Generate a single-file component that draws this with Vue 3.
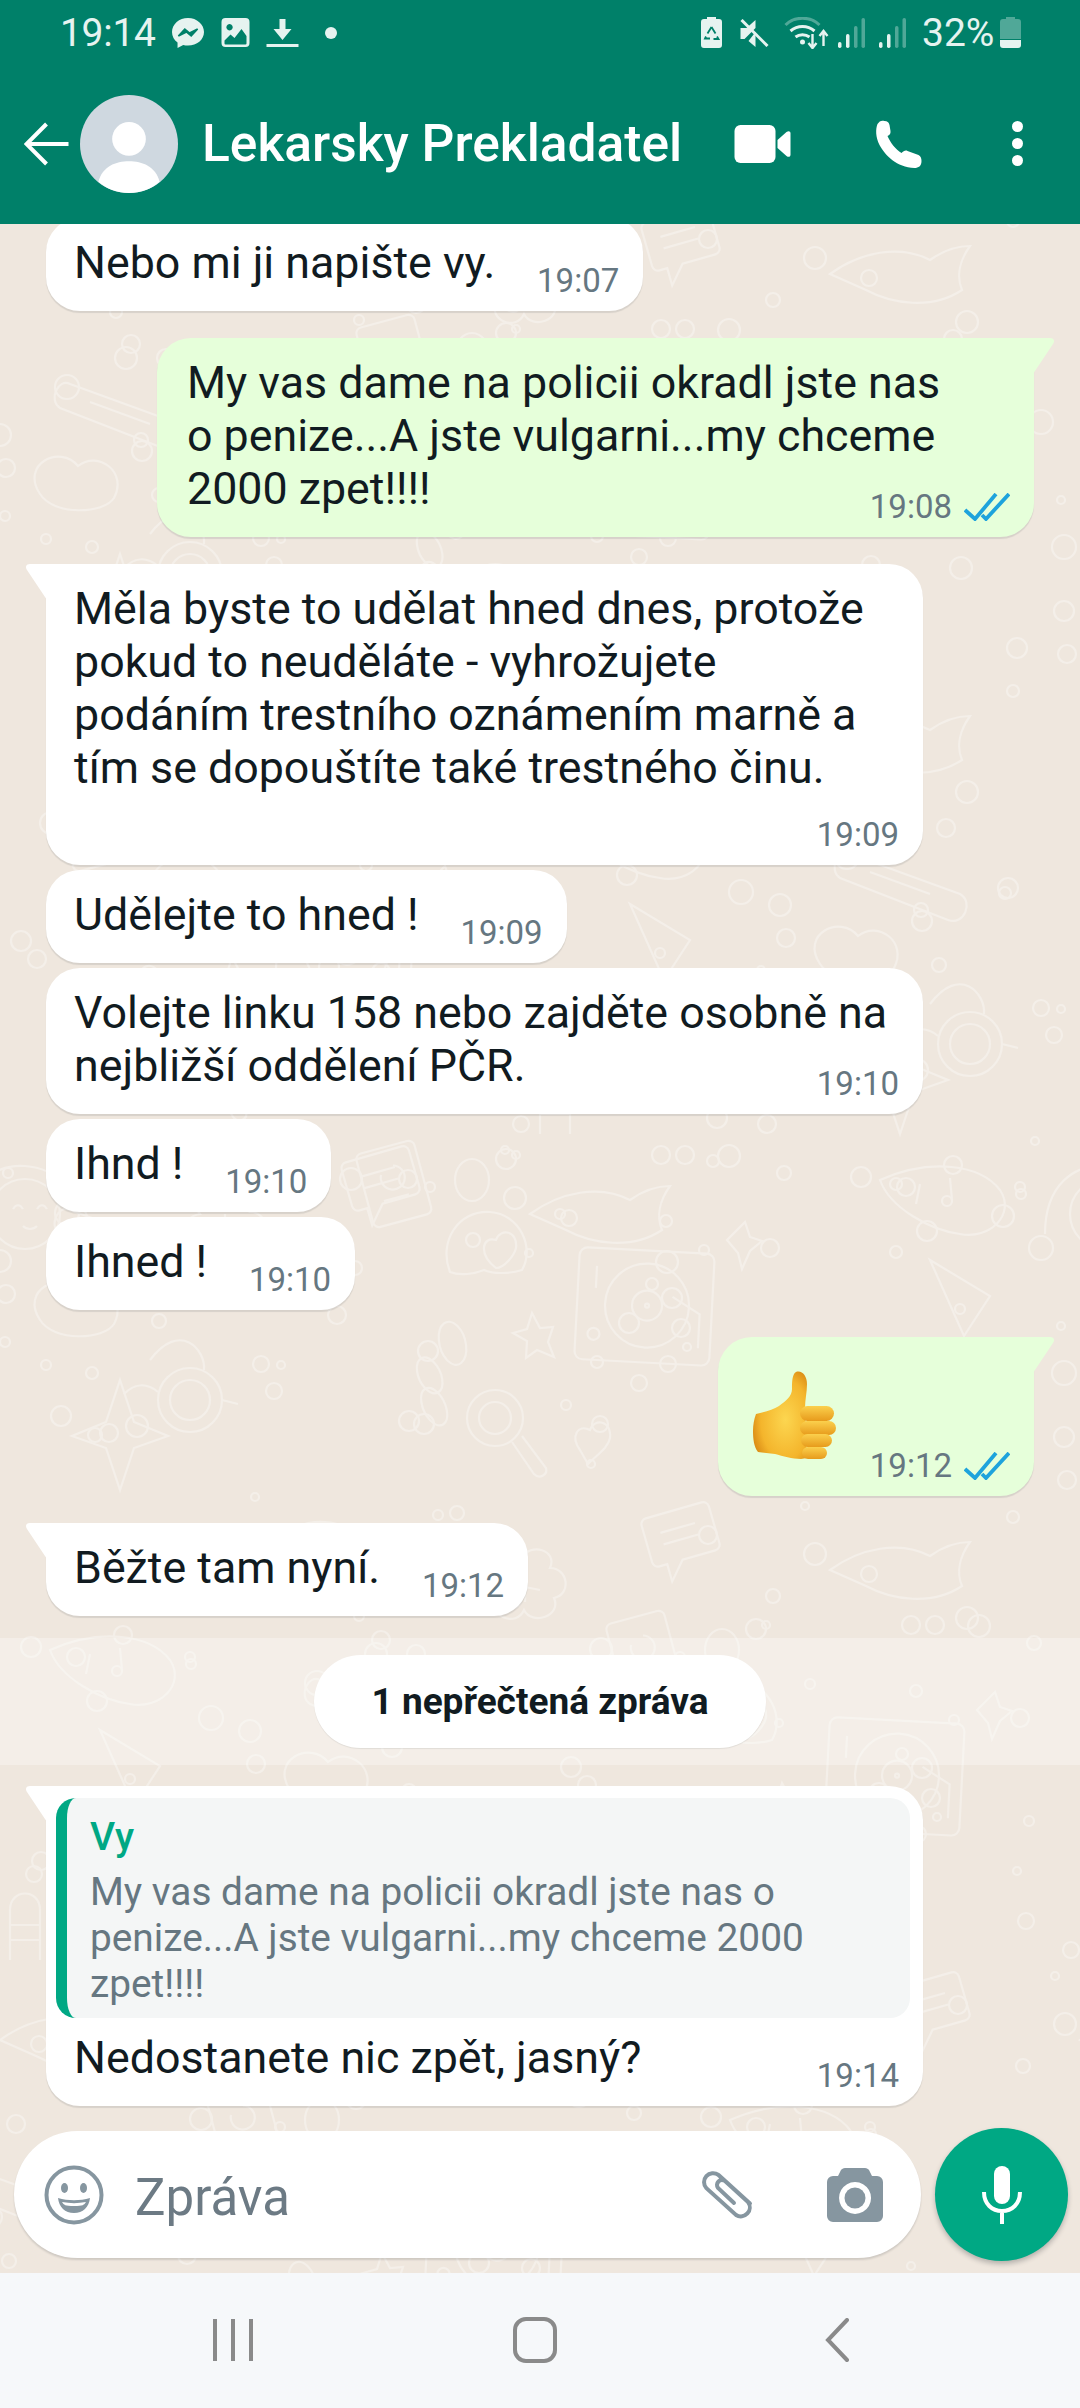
<template>
  <div class="phone">
    <header class="appbar">
      <div class="status">
        <span class="clock">19:14</span>
        <svg class="st st-msg" viewBox="0 0 30 30" preserveAspectRatio="none"><path class="st-fill" d="M15 0C6.700 0 0 6.200 0 14c0 4.300 2 8 5.200 10.500V30l5.300-3c1.400.400 2.900.600 4.500.600 8.300 0 15-6 15-13.600S23.300 0 15 0z"/><path d="M6 18l6-7 4.500 4L24 11l-6 7-4.500-4z" fill="#008069" stroke="#008069" stroke-width="1.500"/></svg>
        <svg class="st st-pic" viewBox="0 0 28 29"><path class="st-fill" fill-rule="evenodd" d="M4 0h20a4 4 0 0 1 4 4v21a4 4 0 0 1-4 4H4a4 4 0 0 1-4-4V4a4 4 0 0 1 4-4zM3 25.500a1 1 0 0 0 1 1h20a1 1 0 0 0 1-1V18l-5-7-7 9-4-3.500-6 6zM8 6a3.200 3.200 0 1 0 .1 0z"/></svg>
        <svg class="st st-down" viewBox="0 0 32 28"><path class="st-fill" d="M13 0h6v10h6l-9 11-9-11h6z"/><rect class="st-fill" y="25" width="32" height="3"/></svg>
        <span class="dot"></span>
        <span class="grow"></span>
        <svg class="st st-bat" viewBox="0 0 21 31"><path class="st-fill" d="M6 0h9v2h3a3 3 0 0 1 3 3v23a3 3 0 0 1-3 3H3a3 3 0 0 1-3-3V5a3 3 0 0 1 3-3h3z"/><path d="M10.500 10l-4 6.500M10.500 10l4 6.500M5 19.500l-1 2h5M16 19.500l1.500 2.500h-5" fill="none" stroke="#008069" stroke-width="1.800"/></svg>
        <svg class="st st-mute" viewBox="0 0 28 28"><path class="st-fill" d="M0 9h6l9-8v8L4 20H0zM15 13v15l-7-6z"/><path class="st-line" d="M1 1l26 26" stroke-width="3"/></svg>
        <svg class="st st-wifi" viewBox="0 0 44 32">
          <path class="st-line dim" d="M1 8C10-1 26-1 35 8" stroke-width="3"/>
          <path class="st-line" d="M6 14c7-6 17-6 24 0M11 20c4-3 10-3 14 0" stroke-width="3"/>
          <circle class="st-fill" cx="18" cy="25" r="2.500"/>
          <path class="st-line" d="M28 17v13M24 26l4 5 4-5M39 29V15M35 19l4-5 4 5" stroke-width="2.400"/>
        </svg>
        <svg class="st st-sig" viewBox="0 0 27 30"><rect class="st-fill" y="24" width="3.500" height="6" rx="1.700"/><rect class="st-fill" x="8" y="16" width="3.500" height="14" rx="1.700"/><rect class="st-fill dim" x="16" y="8" width="3.500" height="22" rx="1.700"/><rect class="st-fill dim" x="23.500" width="3.500" height="30" rx="1.700"/></svg>
        <svg class="st st-sig second" viewBox="0 0 27 30"><rect class="st-fill" y="24" width="3.500" height="6" rx="1.700"/><rect class="st-fill" x="8" y="16" width="3.500" height="14" rx="1.700"/><rect class="st-fill dim" x="16" y="8" width="3.500" height="22" rx="1.700"/><rect class="st-fill dim" x="23.500" width="3.500" height="30" rx="1.700"/></svg>
        <span class="percent">32%</span>
        <svg class="st st-level" viewBox="0 0 21 31"><path class="st-fill dim" d="M6 0h9v2h3a3 3 0 0 1 3 3v17H0V5a3 3 0 0 1 3-3h3z"/><path class="st-fill" d="M0 23h21v5a3 3 0 0 1-3 3H3a3 3 0 0 1-3-3z"/></svg>
      </div>
      <div class="toolbar">
        <svg class="back" viewBox="0 0 44 44"><path d="M44 22H3M22 2L2 22l20 20" fill="none" stroke="#fff" stroke-width="4"/></svg>
        <svg class="avatar" viewBox="0 0 96 96">
          <circle cx="48" cy="48" r="48" fill="#cfd8e0"/>
          <circle cx="48" cy="43" r="16.500" fill="#fff"/>
          <path d="M18 85c4-15 17-20 30-20s26 5 30 20c-8 7-18 11-30 11s-22-4-30-11z" fill="#fff"/>
        </svg>
        <h1 class="title">Lekarsky Prekladatel</h1>
        <svg class="video" viewBox="0 0 56 38"><rect width="41" height="38" rx="6" fill="#fff"/><path d="M43 15L52 7c2-1.500 4-1 4 1.500v21c0 2.500-2 3-4 1.500l-9-8z" fill="#fff"/></svg>
        <svg class="call" viewBox="0 0 48 48"><path d="M3 4C5 1 7 0 10 1c3 0 4 1 5 4l1 6c.3 3-1 4-3 5 3 7 8 13 14 17 2-2 4-3 6-2l11 4c2 1 3 3 3 6 0 5-3 7-7 7C22 47 11 36 5 25 1 17 1 9 3 4z" fill="#fff"/></svg>
        <span class="kebab"><i></i><i></i><i></i></span>
      </div>
    </header>

    <main class="chat">
      <svg class="doodles" width="1080" height="2049" viewBox="0 0 1080 2049">
        <defs>
          <g id="tile">
            <circle v-for="(b, i) in specks" :key="i" :cx="b.x" :cy="b.y" :r="b.r"/>
            <g transform="translate(355 5) rotate(-15)"><rect width="60" height="76" rx="6"/><path d="M20 26a12 12 0 1 0 14-6M16 52h26"/></g>
            <ellipse cx="472" cy="30" rx="17" ry="21"/>
            <path d="M450 122c-12-30 8-62 40-60 30 2 45 36 32 58-12 4-30 4-38 0-10 4-24 6-34 2z"/>
            <path d="M496 118c-18-14-14-32 0-28 4-12 22-10 20 8-2 8-12 20-20 20z"/>
            <g transform="translate(580 97) rotate(3)"><rect width="135" height="112" rx="8"/><circle cx="70" cy="55" r="42"/><circle cx="70" cy="55" r="15"/><circle cx="70" cy="55" r="2"/><circle cx="18" cy="86" r="6"/><path d="M95 45l28 16v34M18 18v22"/></g>
            <path d="M727 90l18-18 5 15 12 4-12 10-8 18-4-16z"/>
            <path d="M532 163l8 15 13-1-5 15 6 15-17-7-11 8 1-17-14-8 14-4z"/>
            <path d="M447 210a13 22 -15 1 1 1 1zM425 238a11 19 -25 1 1 1 1zM430 270a11 20 -25 1 1 1 1z"/>
            <circle cx="495" cy="268" r="28"/><circle cx="495" cy="268" r="16"/><path d="M512 292l22 32c6 6 14 0 12-6l-24-32"/>
            <path d="M580 300c-10-14-2-26 10-20 4-12 22-10 20 8-2 10-12 16-22 26z"/>
            <g transform="translate(345 380)"><path d="M-80 60c0-50 30-70 60-68s58 24 68 70"/><circle cx="-20" cy="40" r="35"/><path d="M-32 35c3-5 7-5 10 0M-8 35c3-5 7-5 10 0M-22 52c4 4 10 4 14 0"/></g>
            <g transform="translate(500 420)"><path d="M0 0c-14-18 14-30 22-12 8-16 36-8 28 10 18 0 22 26 4 30 8 18-22 28-30 12-8 18-36 6-28-12-14 0-18-24 4-28z"/><path d="M10 14l30 6M25 0v32"/></g>
            <g transform="translate(640 370) rotate(-16)"><path d="M0 6a6 6 0 0 1 6-6h58a6 6 0 0 1 6 6v38a6 6 0 0 1-6 6H30l-16 18V50H6a6 6 0 0 1-6-6z"/><path d="M16 18h36M16 30h36"/></g>
            <path d="M70 60l110 40c14 8 4 32-12 26L60 84c-12-8-2-30 10-24zM90 78l60 22"/>
            <path d="M40 170c-20-30 20-50 38-28 20-16 50 6 36 32-10 16-60 18-74-4z"/>
            <path d="M120 230l14 42 34 14-34 12-14 42-14-42-34-12 34-14z"/>
            <path d="M880 30c50-22 100-16 120 10 16 24-10 50-40 44-30-4-70-26-80-54zM920 34l-4 20M950 28l2 22"/>
            <path d="M930 110l60 36-26 40z"/>
            <g transform="translate(860 260)"><path d="M-20 80V30c0-22 30-22 30 0v50M-20 45h30M-20 60h30"/></g>
            <path d="M830 420c30-22 70-30 100-14 14-10 26-14 40-14-10 14-14 30-8 44-30 20-70 14-96 0z"/>
            <g transform="translate(190 250)"><circle cx="0" cy="0" r="32"/><circle cx="0" cy="0" r="20"/><path d="M-32-8c-12-10-24-8-34 2M32 0l16 4"/><path d="M-40-40c30-40 56-10 54 10"/></g>
          </g>
        </defs>
        <use v-for="r in tileRows" :key="r.y + '-' + r.x" href="#tile" :transform="`translate(${r.x} ${r.y})`"/>
      </svg>

      <section class="messages">
        <div class="bubble in" style="margin-bottom:27px"><p class="text">Nebo mi ji napište vy.<span class="spacer"></span></p><span class="time">19:07</span></div>

        <div class="bubble out tail full" style="margin-bottom:27px">
          <p class="text">{{ msg1 }}<span class="spacer"></span></p>
          <span class="time">19:08<svg class="ticks" viewBox="0 0 46 28"><path d="M1 17l10 9L32 1M18 22l4 4L45 1" fill="none" stroke="#1ea3dc" stroke-width="3.800"/></svg></span>
        </div>

        <div class="group">
          <div v-for="m in group1" :key="m.text" class="bubble in" :class="{ tail: m.tail, full: m.full, 'time-row': m.row }">
            <p class="text">{{ m.text }}<span class="spacer"></span></p>
            <span class="time">{{ m.time }}</span>
          </div>
        </div>

        <div class="bubble out tail thumbs">
          <svg class="emoji" viewBox="0 0 84 90">
            <defs>
              <linearGradient id="fist" x1="0" y1="0" x2="0" y2="1"><stop offset="0" stop-color="#fbd04d"/><stop offset="1" stop-color="#e79b1c"/></linearGradient>
              <radialGradient id="palm" cx=".6" cy=".55" r=".65"><stop offset="0" stop-color="#fcd650"/><stop offset=".7" stop-color="#f4b52c"/><stop offset="1" stop-color="#d98a14"/></radialGradient>
            </defs>
            <path d="M3 43C12 41 20 39 26 35c7-5 13-10 13-17 0-6 0-15 4-17 6-2 11 4 11 12 0 8-2 16-2 24l2 50-6 1c-9 0-18-3-26-5L5 81C1 76 0 68 0 60c0-6 1-12 3-17z" fill="url(#palm)"/>
            <rect x="47" y="35" width="34" height="15" rx="7.500" fill="url(#fist)"/>
            <rect x="47" y="50" width="36" height="14" rx="7" fill="url(#fist)"/>
            <rect x="48" y="63" width="31" height="13" rx="6.500" fill="url(#fist)"/>
            <rect x="49" y="76" width="25" height="12" rx="6" fill="url(#fist)"/>
          </svg>
          <span class="time">19:12<svg class="ticks" viewBox="0 0 46 28"><path d="M1 17l10 9L32 1M18 22l4 4L45 1" fill="none" stroke="#1ea3dc" stroke-width="3.800"/></svg></span>
        </div>

        <div class="bubble in tail"><p class="text">Běžte tam nyní.<span class="spacer"></span></p><span class="time">19:12</span></div>

        <div class="unread"><span class="pill">1 nepřečtená zpráva</span></div>

        <div class="bubble in tail full reply">
          <div class="quote">
            <strong>Vy</strong>
            <p>{{ quoted }}</p>
          </div>
          <p class="text">Nedostanete nic zpět, jasný?<span class="spacer"></span></p>
          <span class="time">19:14</span>
        </div>
      </section>

      <footer class="composer">
        <div class="field">
          <svg class="smile" viewBox="0 0 60 60">
            <circle cx="30" cy="30" r="27.500" fill="none" stroke="#8696a0" stroke-width="4"/>
            <ellipse cx="20.500" cy="23" rx="3.500" ry="5" fill="#8696a0"/><ellipse cx="39.500" cy="23" rx="3.500" ry="5" fill="#8696a0"/>
            <path d="M14 33c10 3 22 3 32 0-1 9-7 15-16 15s-15-6-16-15z" fill="#8696a0"/>
            <path d="M18 37c8 1.500 16 1.500 24 0-2 3-3 4-12 4s-10-1-12-4z" fill="#fff"/>
          </svg>
          <span class="placeholder">Zpráva</span>
          <svg class="clip" viewBox="0 0 60 54"><path d="M34 35L18 20a5 5 0 0 1 7-7L48 34a9 9 0 0 1-12 13L6.400 20.200a9 9 0 0 1 12-13.300L50 35.500" fill="none" stroke="#8696a0" stroke-width="4" stroke-linecap="round"/></svg>
          <svg class="camera" viewBox="0 0 56 54"><path fill-rule="evenodd" fill="#8696a0" d="M18 0h20c2 0 3 1 4 2l3 6h5a6 6 0 0 1 6 6v34a6 6 0 0 1-6 6H6a6 6 0 0 1-6-6V14a6 6 0 0 1 6-6h5l3-6c1-1 2-2 4-2zM28 14a16 16 0 1 0 .1 0z"/><circle cx="28" cy="30" r="10.500" fill="#8696a0"/></svg>
        </div>
        <button class="mic">
          <svg viewBox="0 0 40 58"><rect x="12" width="16" height="38" rx="8" fill="#fff"/><path d="M2 26c0 12 8 19 18 19s18-7 18-19M20 45v13" fill="none" stroke="#fff" stroke-width="4"/></svg>
        </button>
      </footer>
    </main>

    <nav class="navbar">
      <svg class="nav-lines" viewBox="0 0 40 42"><path d="M2 0v42M20 0v42M38 0v42" stroke="#8a8a8a" stroke-width="4" fill="none"/></svg>
      <span class="nav-home"></span>
      <svg class="nav-back" viewBox="0 0 24 44"><path d="M22 2L3 22l19 20" stroke="#8a8a8a" stroke-width="4" fill="none" stroke-linecap="round"/></svg>
    </nav>
  </div>
</template>

<script setup>
const msg1 = 'My vas dame na policii okradl jste nas\no penize...A jste vulgarni...my chceme\n2000 zpet!!!!'
const quoted = 'My vas dame na policii okradl jste nas o\npenize...A jste vulgarni...my chceme 2000\nzpet!!!!'

const group1 = [
  { text: 'Měla byste to udělat hned dnes, protože\npokud to neuděláte - vyhrožujete\npodáním trestního oznámením marně a\ntím se dopouštíte také trestného činu.', time: '19:09', tail: true, full: true, row: true },
  { text: 'Udělejte to hned !', time: '19:09' },
  { text: 'Volejte linku 158 nebo zajděte osobně na\nnejbližší oddělení PČR.', time: '19:10', full: true },
  { text: 'Ihnd !', time: '19:10' },
  { text: 'Ihned !', time: '19:10' }
]

// small rings of the wallpaper, spread with a fixed seed so every run looks the same
let seed = 17
const rnd = () => {
  seed = (seed * 16807) % 2147483647
  return seed / 2147483647
}
const specks = Array.from({ length: 90 }, () => ({
  x: Math.round(rnd() * 1080),
  y: Math.round(rnd() * 470),
  r: 4 + Math.round(rnd() * 8)
}))

const tileRows = [
  { x: 0, y: -370 },
  { x: 0, y: 100 },
  { x: -300, y: 570 },
  { x: 780, y: 570 },
  { x: 0, y: 926 },
  { x: 250, y: 1396 },
  { x: -830, y: 1396 },
  { x: -150, y: 1866 }
]
</script>

<style>
html,
body {
  margin: 0;
  background: #efe7de;
}
</style>

<style scoped>
.phone {
  width: 1080px;
  height: 2408px;
  display: flex;
  flex-direction: column;
  overflow: hidden;
  font-family: Roboto, "Noto Sans", sans-serif;
  color: #111b21;
}

.appbar {
  height: 224px;
  flex: none;
  background: #008069;
}
.status {
  height: 65px;
  padding: 0 59px 0 60px;
  display: flex;
  align-items: center;
  color: #e6f3f0;
  font-size: 39px;
}
.clock {
  width: 112px;
  letter-spacing: -0.3px;
}
.st {
  display: block;
  flex: none;
}
.st-fill {
  fill: #e6f3f0;
}
.st-line {
  fill: none;
  stroke: #e6f3f0;
}
.dim {
  opacity: 0.35;
}
.st-msg {
  width: 32px;
  height: 30px;
}
.st-pic {
  width: 29px;
  height: 29px;
  margin-left: 17px;
}
.st-down {
  width: 33px;
  height: 28px;
  margin-left: 16px;
}
.dot {
  width: 12px;
  height: 12px;
  margin-left: 26px;
  border-radius: 50%;
  background: #e6f3f0;
}
.grow {
  flex: 1;
}
.st-bat {
  width: 21px;
  height: 31px;
}
.st-mute {
  width: 29px;
  height: 28px;
  margin-left: 18px;
}
.st-wifi {
  width: 45px;
  height: 32px;
  margin-left: 15px;
}
.st-sig {
  width: 27px;
  height: 30px;
  margin-left: 9px;
}
.st-sig.second {
  margin-left: 14px;
}
.percent {
  margin-left: 16px;
  width: 78px;
}
.st-level {
  width: 21px;
  height: 31px;
}

.toolbar {
  height: 159px;
  display: flex;
  align-items: center;
  padding-bottom: 2px;
  box-sizing: border-box;
}
.back {
  width: 45px;
  height: 44px;
  margin-left: 24px;
}
.avatar {
  width: 98px;
  height: 98px;
  margin-left: 11px;
}
.title {
  margin: 0 0 0 24px;
  width: 532px;
  color: #fff;
  font-size: 51.500px;
  font-weight: 500;
  white-space: nowrap;
}
.video {
  width: 57px;
  height: 38px;
}
.call {
  width: 49px;
  height: 48px;
  margin-left: 83px;
}
.kebab {
  display: flex;
  flex-direction: column;
  gap: 6px;
  margin-left: 89px;
}
.kebab i {
  width: 11px;
  height: 11px;
  border-radius: 50%;
  background: #fff;
}

.chat {
  flex: 1;
  min-height: 0;
  position: relative;
  overflow: hidden;
  display: flex;
  flex-direction: column;
  background: #efe7de;
}
.doodles {
  position: absolute;
  top: 0;
  left: 0;
  fill: none;
  stroke: #f4efe9;
  stroke-width: 2.2;
}
.messages {
  flex: 1;
  min-height: 0;
  position: relative;
  display: flex;
  flex-direction: column;
  justify-content: flex-end;
  align-items: flex-start;
  padding: 0 46px;
}
.group {
  display: flex;
  flex-direction: column;
  align-items: flex-start;
  gap: 5px;
  margin-bottom: 27px;
}
.bubble {
  position: relative;
  flex: none;
  box-sizing: border-box;
  width: fit-content;
  padding: 18px 28px 22px;
  border-radius: 34px;
  background: #fff;
  box-shadow: 0 2px 1px rgba(11, 20, 26, 0.1);
}
.bubble.out {
  align-self: flex-end;
  background: #e6ffda;
  padding-left: 30px;
}
.bubble.full {
  width: 877px;
}
.bubble.time-row {
  padding-bottom: 18px;
}
.bubble.tail.in {
  border-top-left-radius: 0;
}
.bubble.tail.out {
  border-top-right-radius: 0;
}
.bubble.tail::before {
  content: "";
  position: absolute;
  top: 0;
  width: 21px;
  height: 36px;
  background: inherit;
}
.bubble.tail.in::before {
  left: -20px;
  clip-path: path("M21 0H4C0 0-1 3 1 6L21 36z");
}
.bubble.tail.out::before {
  right: -20px;
  clip-path: path("M0 0H17C21 0 22 3 20 6L0 36z");
}
.text {
  margin: 0;
  font-size: 44.750px;
  line-height: 53px;
  white-space: pre-line;
}
.spacer {
  display: inline-block;
  width: 120px;
  height: 1px;
}
.out .spacer {
  width: 170px;
}
.time {
  position: absolute;
  right: 24px;
  bottom: 11px;
  display: flex;
  align-items: center;
  gap: 12px;
  color: #667781;
  font-size: 33px;
  line-height: 38px;
}
.ticks {
  width: 46px;
  height: 28px;
}
.bubble.out.thumbs {
  width: 316px;
  height: 159px;
  margin-bottom: 27px;
  padding: 34px 35px 0;
}
.emoji {
  display: block;
  width: 84px;
  height: 90px;
}
.unread {
  flex: none;
  align-self: stretch;
  margin: 22px -46px 21px;
  height: 127px;
  display: flex;
  align-items: center;
  justify-content: center;
  background: rgba(255, 255, 255, 0.3);
}
.pill {
  width: 452px;
  height: 93px;
  display: flex;
  align-items: center;
  justify-content: center;
  border-radius: 47px;
  background: #fff;
  font-size: 37px;
  font-weight: 700;
  box-shadow: 0 1px 1px rgba(11, 20, 26, 0.08);
}
.bubble.reply {
  padding: 12px 13px 22px 10px;
}
.reply .text {
  padding-left: 18px;
  margin-top: 13px;
}
.quote {
  box-sizing: border-box;
  height: 220px;
  padding: 16px 20px 0 23px;
  border-left: 11px solid #00a884;
  border-radius: 20px;
  background: #f4f6f6;
  color: #667781;
  font-size: 38.800px;
}
.quote strong {
  display: block;
  margin-bottom: 9px;
  color: #00a884;
  font-size: 39px;
  font-weight: 500;
  line-height: 46px;
}
.quote p {
  margin: 0;
  line-height: 46px;
  white-space: pre-line;
}

.composer {
  position: relative;
  flex: none;
  height: 167px;
  display: flex;
  align-items: flex-start;
  padding: 25px 12px 0 14px;
  box-sizing: border-box;
}
.field {
  width: 907px;
  height: 127px;
  flex: none;
  display: flex;
  align-items: center;
  border-radius: 64px;
  background: #fff;
  box-shadow: 0 2px 2px rgba(11, 20, 26, 0.14);
}
.smile {
  width: 60px;
  height: 60px;
  margin-left: 30px;
}
.placeholder {
  width: 565px;
  margin: 6px 0 0 31px;
  color: #6c7a84;
  font-size: 51px;
}
.clip {
  width: 60px;
  height: 54px;
}
.camera {
  width: 56px;
  height: 54px;
  margin-left: 67px;
}
.mic {
  width: 133px;
  height: 133px;
  flex: none;
  margin: -3px 0 0 14px;
  padding: 0;
  border: none;
  border-radius: 50%;
  display: flex;
  align-items: center;
  justify-content: center;
  background: #00a884;
  box-shadow: 0 3px 5px rgba(11, 20, 26, 0.25);
}
.mic svg {
  width: 40px;
  height: 58px;
}

.navbar {
  position: relative;
  flex: none;
  height: 135px;
  display: flex;
  align-items: center;
  padding-bottom: 2px;
  box-sizing: border-box;
  background: #f6f8fa;
}
.nav-lines {
  width: 40px;
  height: 42px;
  margin-left: 213px;
}
.nav-home {
  width: 44px;
  height: 46px;
  box-sizing: border-box;
  margin-left: 260px;
  border: 4.500px solid #8a8a8a;
  border-radius: 13px;
}
.nav-back {
  width: 24px;
  height: 44px;
  margin-left: 268px;
}
</style>
